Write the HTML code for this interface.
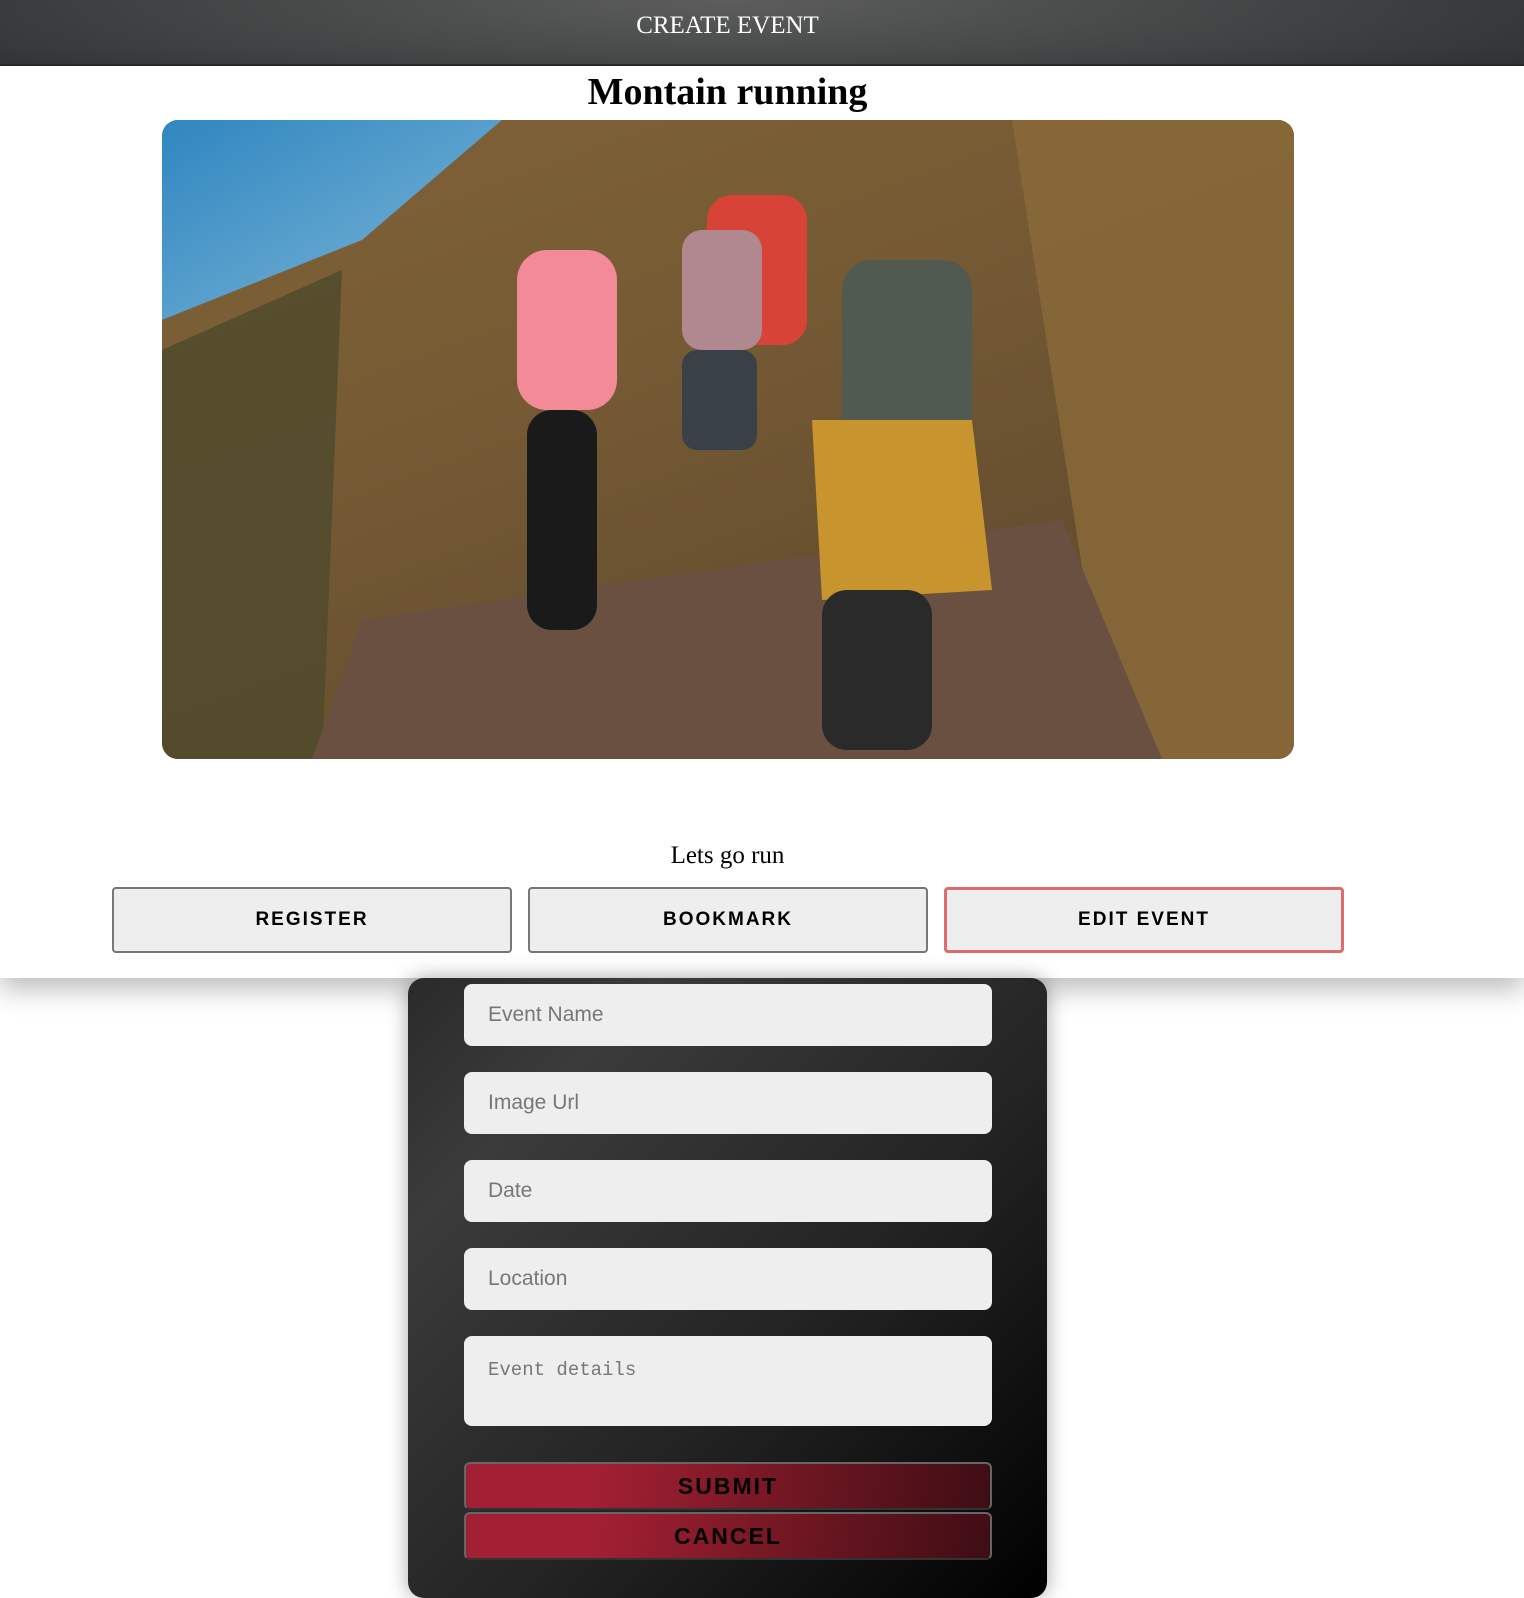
<!DOCTYPE html>
<html><head><meta charset="utf-8"><style>
*{box-sizing:border-box;margin:0;padding:0}
body{width:1524px;height:1586px;overflow:hidden;background:#fff;font-family:"Liberation Serif",serif;position:relative}
.hdr{position:absolute;left:0;top:0;width:1524px;height:66px;background:radial-gradient(ellipse 60% 200% at 48% 0%,#5c5d5c,#303435);border-bottom:2px solid #2a2a2a}
.hdr div{width:1455px;color:#fff;text-align:center;font-size:25px;line-height:52px}
.sec{position:absolute;left:0;top:66px;width:1524px;height:912px;background:#fff;box-shadow:0 12px 24px rgba(0,0,0,.25);z-index:1}
h1{position:absolute;top:4px;left:0;width:1455px;text-align:center;font-size:38px;font-weight:bold}
.img{position:absolute;left:162px;top:54px;width:1132px;height:639px;border-radius:16px;overflow:hidden;background:linear-gradient(160deg,#8a6a3a 0%,#6e5532 40%,#4a3a28 70%,#6a5040 100%)}
.desc{position:absolute;top:776px;left:0;width:1455px;text-align:center;font-size:25px}
.btn{position:absolute;top:821px;width:400px;height:66px;background:#eee;border:2px solid #777;border-radius:4px;font-family:"Liberation Sans",sans-serif;font-weight:bold;font-size:19px;letter-spacing:2px;text-align:center;line-height:62px}
.panel{position:absolute;left:408px;top:978px;width:639px;height:620px;border-radius:16px;background:linear-gradient(135deg,#2a2a2a 0%,#3b3b3b 20%,#222 60%,#000 100%);box-shadow:0 0 20px rgba(0,0,0,.35);z-index:2}
.in{position:absolute;left:56px;width:528px;height:62px;background:#eee;border-radius:8px;font-family:"Liberation Sans",sans-serif;color:#777;font-size:21px;padding-left:24px;line-height:62px}
.rb{position:absolute;left:56px;width:528px;height:48px;border-radius:6px;border:2px solid #666;border-bottom-color:#333;background:linear-gradient(100deg,#a31f33 0%,#a31f33 25%,#6d1621 65%,#3e0d14 100%);font-family:"Liberation Sans",sans-serif;font-weight:bold;font-size:23px;letter-spacing:2px;text-align:center;line-height:44px;color:#000}
</style></head><body>
<div class="hdr"><div>CREATE EVENT</div></div>
<div class="sec">
<h1>Montain running</h1>
<div class="img">
<svg width="1132" height="639" viewBox="0 0 1132 639">
<defs><linearGradient id="sk" x1="0" y1="0" x2="1" y2="1"><stop offset="0" stop-color="#2f86c0"/><stop offset="1" stop-color="#7fb8d8"/></linearGradient></defs>
<polygon points="0,0 340,0 200,120 0,200" fill="url(#sk)"/>
<polygon points="0,200 200,120 340,0 1132,0 1132,639 0,639" fill="#7a5e36" opacity=".6"/>
<polygon points="0,230 180,150 160,639 0,639" fill="#4e4a2c" opacity=".8"/>
<polygon points="850,0 1132,0 1132,639 950,639" fill="#8b6a3a" opacity=".8"/>
<polygon points="200,500 900,400 1000,639 150,639" fill="#6a5040"/>
<rect x="355" y="130" width="100" height="160" rx="30" fill="#f28a98"/>
<rect x="365" y="290" width="70" height="220" rx="25" fill="#1a1a1a"/>
<rect x="545" y="75" width="100" height="150" rx="25" fill="#d84338"/>
<rect x="520" y="110" width="80" height="120" rx="20" fill="#b08890"/>
<rect x="520" y="230" width="75" height="100" rx="15" fill="#3a4048"/>
<rect x="680" y="140" width="130" height="200" rx="30" fill="#505a50"/>
<polygon points="650,300 810,300 830,470 660,480" fill="#c8942e"/>
<rect x="660" y="470" width="110" height="160" rx="25" fill="#2a2a2a"/>
</svg>
</div>
<div class="desc">Lets go run</div>
<div class="btn" style="left:112px">REGISTER</div>
<div class="btn" style="left:528px">BOOKMARK</div>
<div class="btn" style="left:944px;border:3px solid #dd6b70;line-height:60px">EDIT EVENT</div>
</div>
<div class="panel">
<div class="in" style="top:6px">Event Name</div>
<div class="in" style="top:94px">Image Url</div>
<div class="in" style="top:182px">Date</div>
<div class="in" style="top:270px">Location</div>
<div class="in" style="top:358px;height:90px;line-height:20px;padding-top:24px;font-family:'Liberation Mono',monospace;font-size:19px">Event details</div>
<div class="rb" style="top:484px">SUBMIT</div>
<div class="rb" style="top:534px">CANCEL</div>
</div>
</body></html>
